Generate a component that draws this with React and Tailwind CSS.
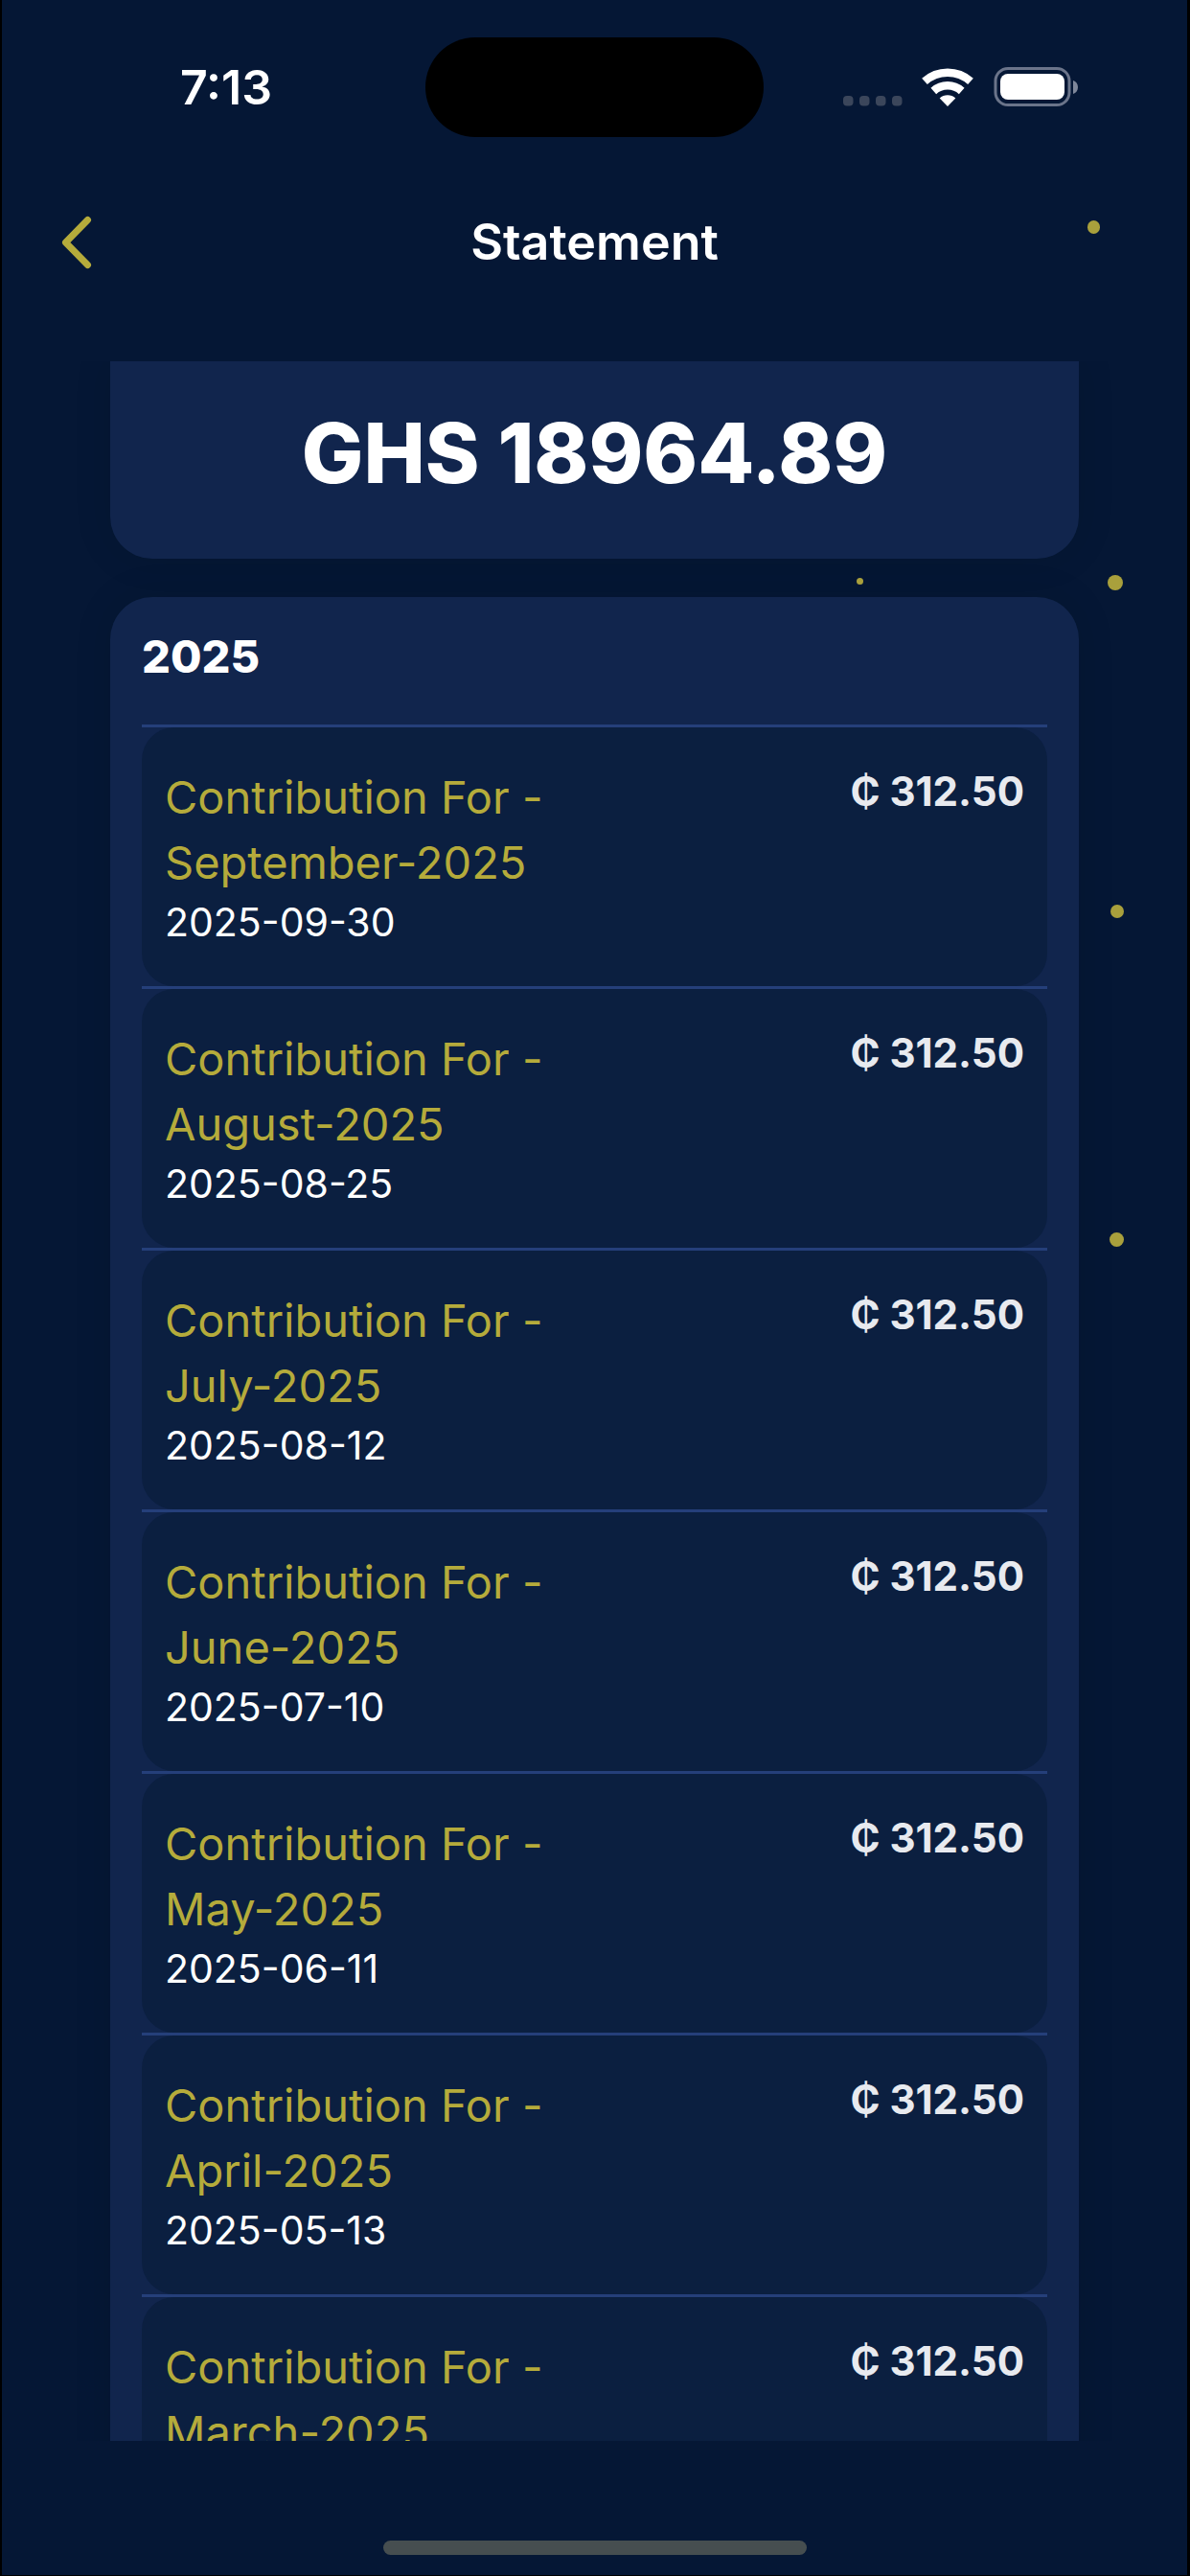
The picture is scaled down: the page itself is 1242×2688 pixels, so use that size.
const contributions = [
    { month: 'September-2025', date: '2025-09-30', amount: '312.50' },
    { month: 'August-2025', date: '2025-08-25', amount: '312.50' },
    { month: 'July-2025', date: '2025-08-12', amount: '312.50' },
    { month: 'June-2025', date: '2025-07-10', amount: '312.50' },
    { month: 'May-2025', date: '2025-06-11', amount: '312.50' },
    { month: 'April-2025', date: '2025-05-13', amount: '312.50' },
    { month: 'March-2025', amount: '312.50' },
];

function StatusBar() {
    return (
        <div className="grid grid-cols-[1fr_auto_1fr] items-center pt-[39px]">
            <span className="pl-[186px] text-[50px] leading-[56px] font-semibold">7:13</span>
            <div className="h-[104px] w-[353px] rounded-full bg-black" />
            <div className="flex items-center justify-end pr-[113px]">
                <svg width="62" height="40" viewBox="0 0 62 40" fill="#3b465b">
                    <rect x="0" y="29" width="10.500" height="10.500" rx="4" />
                    <rect x="17" y="29" width="10.500" height="10.500" rx="4" />
                    <rect x="34" y="29" width="10.500" height="10.500" rx="4" />
                    <rect x="51" y="29" width="10.500" height="10.500" rx="4" />
                </svg>
                <svg className="ml-5" width="54" height="40" viewBox="0 0 54 40" fill="none" stroke="#fff">
                    <path d="M3 13.800a36 36 0 0 1 48 0" strokeWidth="8.500" />
                    <path d="M12.300 24a22 22 0 0 1 29.400 0" strokeWidth="8.500" />
                    <path d="M27 40l-8.300-8.400a12 12 0 0 1 16.600 0z" fill="#fff" stroke="none" />
                </svg>
                <svg className="ml-5" width="90" height="42" viewBox="0 0 90 42">
                    <rect x="3" y="1.500" width="77" height="38" rx="13" fill="none" stroke="#6b748a" strokeWidth="3" />
                    <rect x="8" y="7" width="67" height="27" rx="8" fill="#fff" />
                    <path d="M84 14c3 1 5 3.500 5 7s-2 6-5 7z" fill="#7f879a" />
                </svg>
            </div>
        </div>
    );
}

function ContributionRow({ month, date, amount }) {
    return (
        <li className="border-t-[3px] border-[#253f7a]">
            <div className="flex items-start justify-between rounded-[34px] bg-[#0b1f40] px-6 pt-[39px] pb-[39px]">
                <div>
                    <p className="text-[47px] leading-[68px] text-[#b5ab3b]">
                        Contribution For -<br />
                        {month}
                    </p>
                    {date && <p className="text-[41px] leading-[56px]">{date}</p>}
                </div>
                <p className="text-[42px] leading-[56px] font-bold text-[#e8eaef]">₵ {amount}</p>
            </div>
        </li>
    );
}

export default function App() {
    return (
        <div className="relative flex h-screen flex-col border-r-[3px] border-b border-l-2 border-black bg-[#051735] font-['Inter','Liberation_Sans',sans-serif] text-white">
            {/* Background specks */}
            <span className="absolute top-[230px] right-[91px] h-[14px] w-[13px] rounded-full bg-[#a9a03c]" />
            <span className="absolute top-[603px] right-[338px] size-[7px] rounded-full bg-[#a9a03c]" />
            <span className="absolute top-[600px] right-[67px] size-4 rounded-full bg-[#a9a03c]" />
            <span className="absolute top-[944px] right-[66px] size-[14px] rounded-full bg-[#a9a03c]" />
            <span className="absolute top-[1286px] right-[66px] size-[15px] rounded-full bg-[#a9a03c]" />

            <StatusBar />

            {/* Header */}
            <header className="grid grid-cols-[1fr_auto_1fr] items-center px-[54px] pt-[78px] pb-[92px]">
                <button type="button" aria-label="Back" className="flex h-16 w-12 items-center justify-center">
                    <svg width="34" height="56" viewBox="0 0 34 56" fill="none" stroke="#b5ab3b" strokeWidth="7" strokeLinecap="round" strokeLinejoin="round">
                        <path d="M28.500 4.500L5.500 28l23 23.500" />
                    </svg>
                </button>
                <h1 className="text-[52px] leading-[64px] font-semibold">Statement</h1>
            </header>

            {/* Scroll area */}
            <main className="min-h-0 flex-1 overflow-hidden px-[113px]">
                <section className="rounded-b-[44px] bg-[#11254d] pt-12 pb-[62px] text-center shadow-[0_0_40px_rgba(0,0,0,0.1)]">
                    <p className="text-[86px] leading-[96px] font-extrabold">GHS 18964.89</p>
                </section>

                <section className="mt-10 rounded-[44px] bg-[#11254d] px-[33px] pt-[34px] pb-10 shadow-[0_0_40px_rgba(0,0,0,0.1)]">
                    <h2 className="pb-[43px] text-[47px] leading-[56px] font-extrabold">2025</h2>
                    <ul>
                        {contributions.map((item) => (
                            <ContributionRow key={item.month} {...item} />
                        ))}
                    </ul>
                </section>
            </main>

            {/* Home indicator */}
            <footer className="flex justify-center pt-[104px] pb-[21px]">
                <div className="h-[15px] w-[442px] rounded-full bg-[#464e50]" />
            </footer>
        </div>
    );
}
